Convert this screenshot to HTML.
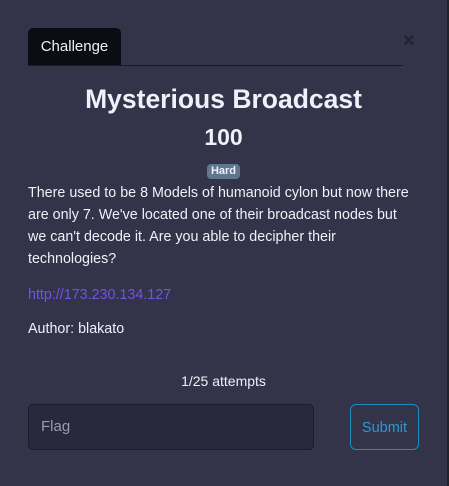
<!DOCTYPE html>
<html><head><style>
body{margin:0;width:449px;height:486px;background:#33334a;font-family:"Liberation Sans",sans-serif;color:#f0f0f8;position:relative;overflow:hidden}
.a{position:absolute;white-space:nowrap}
</style></head><body>
<div class="a" style="left:447px;top:0;width:2px;height:486px;background:#202028"></div>
<div class="a" style="left:28px;top:28px;width:93px;height:38px;background:#0c0c14;border-radius:5px 5px 0 0;font-size:15px;line-height:38px;text-align:center">Challenge</div>
<div class="a" style="left:28px;top:65px;width:375px;height:1px;background:#1a1a26"></div>
<div class="a" style="left:403px;top:30px;font-size:20px;font-weight:bold;color:#222230">×</div>
<div class="a" style="left:0;width:447px;top:82px;text-align:center;font-size:26.5px;font-weight:bold;line-height:34px">Mysterious Broadcast</div>
<div class="a" style="left:0;width:447px;top:123px;text-align:center;font-size:23px;font-weight:bold;line-height:28px">100</div>
<div class="a" style="left:207px;top:164px;width:33px;height:15px;background:#5f7691;border-radius:4px;font-size:11px;font-weight:bold;line-height:15px;text-align:center">Hard</div>
<div class="a" style="left:28px;top:182px;font-size:14.3px;line-height:22px">There used to be 8 Models of humanoid cylon but now there<br>are only 7. We've located one of their broadcast nodes but<br>we can't decode it. Are you able to decipher their<br>technologies?</div>
<div class="a" style="left:28px;top:285px;font-size:14.3px;line-height:20px;color:#7452e8">http://173.230.134.127</div>
<div class="a" style="left:28px;top:319px;font-size:14.3px;line-height:20px">Author: blakato</div>
<div class="a" style="left:0;width:447px;top:371px;text-align:center;font-size:14px;line-height:20px">1/25 attempts</div>
<div class="a" style="left:28px;top:404px;width:286px;height:46px;background:#29293d;border:1px solid #1c1c2a;border-radius:5px;box-sizing:border-box;font-size:15px;line-height:44px;padding-left:12px;color:#9a9aaa">Flag</div>
<div class="a" style="left:350px;top:404px;width:69px;height:46px;border:1px solid #1d8cc0;border-radius:6px;box-sizing:border-box;font-size:14.5px;line-height:46px;text-align:center;color:#2a9ad0">Submit</div>
</body></html>
